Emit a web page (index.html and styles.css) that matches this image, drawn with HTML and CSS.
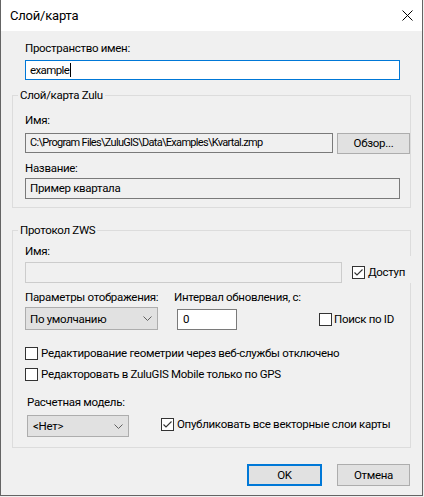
FILE: index.html
```html
<!DOCTYPE html>
<html lang="ru">
<head>
<meta charset="utf-8">
<title>Слой/карта</title>
<link rel="stylesheet" href="styles.css">
</head>
<body>
<div class="window">
  <div class="titlebar">
    <span class="title">Слой/карта</span>
    <svg class="close" width="11" height="11" viewBox="0 0 11 11"><path d="M0.5 0.5L10.5 10.5M10.5 0.5L0.5 10.5" stroke="#000" stroke-width="1" fill="none"/></svg>
  </div>
  <div class="content">
    <div class="label ns-label">Пространство имен:</div>
    <div class="input focus ns-input"><span class="latin">example</span><span class="caret"></span></div>

    <fieldset class="group zulu">
      <legend>Слой/карта Zulu</legend>
      <div class="label name-label">Имя:</div>
      <div class="path-row">
        <div class="input ro path">C:\Program Files\ZuluGIS\Data\Examples\Kvartal.zmp</div>
        <div class="btn browse">Обзор...</div>
      </div>
      <div class="label title-label">Название:</div>
      <div class="input ro title-input">Пример квартала</div>
    </fieldset>

    <fieldset class="group zws">
      <legend>Протокол ZWS</legend>
      <div class="label">Имя:</div>
      <div class="zws-name-row">
        <div class="input disabled zws-name"></div>
        <div class="check access">
          <span class="box"><svg width="11" height="11" viewBox="0 0 11 11"><path d="M1.5 5.5L4 8L9.5 2.5" stroke="#333" stroke-width="1.1" fill="none"/></svg></span>
          <span>Доступ</span>
        </div>
      </div>
      <div class="params">
        <div class="label">Параметры отображения:</div>
        <div class="label interval-label">Интервал обновления, с:</div>
        <div></div>
        <div class="select display-select"><span>По умолчанию</span><svg width="9" height="5" viewBox="0 0 9 5"><path d="M0.5 0.5L4.5 4.5L8.5 0.5" stroke="#606060" stroke-width="1" fill="none"/></svg></div>
        <div class="input white interval">0</div>
        <div class="check search"><span class="box"></span><span>Поиск по ID</span></div>
      </div>
      <div class="check row-check first-check"><span class="box"></span><span>Редактирование геометрии через веб-службы отключено</span></div>
      <div class="check row-check second-check"><span class="box"></span><span>Редакторовать в ZuluGIS Mobile только по GPS</span></div>
      <div class="label model-label">Расчетная модель:</div>
      <div class="model-row">
        <div class="select model-select"><span>&lt;Нет&gt;</span><svg width="9" height="5" viewBox="0 0 9 5"><path d="M0.5 0.5L4.5 4.5L8.5 0.5" stroke="#606060" stroke-width="1" fill="none"/></svg></div>
        <div class="check publish">
          <span class="box"><svg width="11" height="11" viewBox="0 0 11 11"><path d="M1.5 5.5L4 8L9.5 2.5" stroke="#333" stroke-width="1.1" fill="none"/></svg></span>
          <span>Опубликовать все векторные слои карты</span>
        </div>
      </div>
    </fieldset>

    <div class="footer">
      <div class="btn ok">OK</div>
      <div class="btn cancel">Отмена</div>
    </div>
  </div>
</div>
</body>
</html>
```

FILE: styles.css
```css
* { box-sizing: border-box; }
html, body { margin: 0; padding: 0; background: #f0f0f0; }
body {
  font-family: Roboto, "Noto Sans", sans-serif;
  font-size: 11.5px;
  letter-spacing: -0.3px;
  color: #000;
}
.window {
  width: 423px;
  height: 496px;
  background: #f0f0f0;
  border-left: 1px solid #646464;
  border-right: 1px solid #646464;
  border-bottom: 1px solid #646464;
}
.titlebar {
  height: 31px;
  background: #fff;
  display: flex;
  align-items: center;
  justify-content: space-between;
  padding: 0 9px 0 9px;
}
.title { font-size: 13px; line-height: 18px; letter-spacing: -0.2px; }
.close { margin-top: -1px; }
.content { padding: 0 12px 0 11px; }
.label { line-height: 15px; height: 15px; white-space: nowrap; }
.ns-label { margin: 10px 0 0 13px; }
.input {
  height: 21px;
  border: 1px solid #7a7a7a;
  background: #f0f0f0;
  padding: 0 4px;
  line-height: 19px;
  white-space: nowrap;
  overflow: hidden;
  flex: none;
}
.ns-input {
  margin: 4px 0 0 13px;
  width: 375px;
  height: 20px;
  line-height: 18px;
  background: #fff;
  border-color: #0078d7;
  display: flex;
  align-items: center;
}
.latin { letter-spacing: -0.6px; }
.caret { display: inline-block; width: 1px; height: 14px; background: #000; margin-left: 1px; }

.group {
  margin: 0;
  border: 1px solid #dcdcdc;
  padding: 0 12px;
  min-width: 0;
  width: 399px;
}
.group legend {
  padding: 0 2px;
  margin-left: -7px;
  line-height: 15px;
}
.zulu { margin-top: 8px; padding-top: 10px; padding-bottom: 8px; }
.name-label { margin-bottom: 5px; }
.path-row { display: flex; align-items: flex-start; }
.path { width: 308px; height: 20px; line-height: 18px; font-size: 11px; letter-spacing: -0.7px; }
.btn {
  background: #e1e1e1;
  border: 1px solid #adadad;
  text-align: center;
  white-space: nowrap;
  flex: none;
}
.browse { width: 73px; height: 21px; line-height: 19px; margin-left: 4px; }
.title-label { margin-top: 7px; }
.title-input { margin-top: 2px; width: 375px; }

.zws { margin-top: 15px; padding-top: 6px; padding-bottom: 10px; }
.zws-name-row { display: flex; align-items: center; margin-top: 3px; height: 21px; }
.disabled { border-color: #cccccc; background: #f0f0f0; }
.zws-name { width: 317px; }
.check { display: flex; align-items: center; white-space: nowrap; line-height: 15px; }
.box {
  width: 13px; height: 13px;
  border: 1px solid #333;
  background: #fff;
  flex: none;
  display: flex;
  align-items: center;
  justify-content: center;
  margin-right: 3px;
}
.access {
  align-self: stretch;
  margin: -6px -16px 0 8px;
  padding: 6px 6px 0 2px;
  background: #f0f0f0;
  flex: none;
}
.params {
  display: grid;
  grid-template-columns: 149px 145px auto;
  margin-top: 7px;
  align-items: start;
}
.select {
  background: #e1e1e1;
  border: 1px solid #adadad;
  display: flex;
  align-items: center;
  justify-content: space-between;
  white-space: nowrap;
  flex: none;
}
.display-select { width: 133px; height: 23px; margin-top: 2px; padding: 0 5px 0 4px; }
.white { background: #fff; }
.interval { width: 60px; margin: 4px 0 0 3px; padding-left: 5px; }
.search { margin-top: 7px; }
.search .box { margin-right: 2px; }
.row-check { height: 15px; }
.first-check { margin-top: 16px; }
.second-check { margin-top: 6px; }
.model-label { margin: 13px 0 0 2px; }
.model-row { display: flex; align-items: flex-start; margin-top: 5px; margin-left: 2px; }
.model-select { width: 102px; height: 22px; padding: 0 5px 0 5px; }
.publish { margin: 2px 0 0 32px; }

.footer {
  display: flex;
  justify-content: flex-end;
  gap: 15px;
  margin-top: 16px;
}
.ok { width: 75px; height: 22px; line-height: 18px; border: 2px solid #0078d7; }
.cancel { width: 73px; height: 22px; line-height: 20px; }
```
